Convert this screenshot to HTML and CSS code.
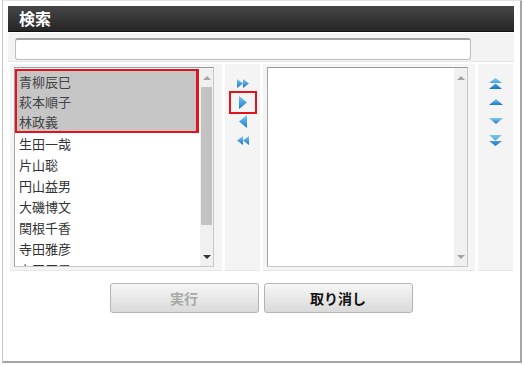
FILE: index.html
```html
<!DOCTYPE html>
<html lang="ja">
<head>
    <meta charset="UTF-8">
    <meta name="viewport" content="width=device-width, initial-scale=1.0">
    <title>検索</title>
    <link rel="stylesheet" href="styles.css">
</head>
<body>
    <svg width="0" height="0" class="defs">
        <defs>
            <linearGradient id="blue" x1="0" y1="0" x2="0" y2="1">
                <stop offset="0" stop-color="#7cc8f2"/>
                <stop offset="1" stop-color="#1877cc"/>
            </linearGradient>
        </defs>
    </svg>

    <div class="frame">
        <div class="head">検索</div>

        <div class="search">
            <input type="text" class="search-input">
        </div>

        <div class="lists">
            <!-- liste de gauche -->
            <div class="cell cell-list">
                <div class="box">
                    <div class="items">
                        <div class="picked">
                            <div class="item">青柳辰巳</div>
                            <div class="item">萩本順子</div>
                            <div class="item">林政義</div>
                        </div>
                        <div class="item">生田一哉</div>
                        <div class="item">片山聡</div>
                        <div class="item">円山益男</div>
                        <div class="item">大磯博文</div>
                        <div class="item">関根千香</div>
                        <div class="item">寺田雅彦</div>
                        <div class="item">上田辰男</div>
                    </div>
                    <div class="scroll">
                        <span class="arrow"><i class="tri-up"></i></span>
                        <span class="thumb"></span>
                        <span class="track"></span>
                        <span class="arrow"><i class="tri-down dark"></i></span>
                    </div>
                </div>
            </div>

            <!-- boutons de transfert -->
            <div class="cell cell-tools">
                <div class="tool">
                    <svg width="12" height="9" viewBox="0 0 12 9"><path d="M0 0L6 4.5L0 9Z M6 0L12 4.5L6 9Z" fill="url(#blue)"/></svg>
                </div>
                <div class="tool on">
                    <svg width="8" height="13" viewBox="0 0 8 13"><path d="M0 0L8 6.5L0 13Z" fill="url(#blue)"/></svg>
                </div>
                <div class="tool">
                    <svg width="8" height="13" viewBox="0 0 8 13"><path d="M8 0L0 6.5L8 13Z" fill="url(#blue)"/></svg>
                </div>
                <div class="tool">
                    <svg width="12" height="9" viewBox="0 0 12 9"><path d="M12 0L6 4.5L12 9Z M6 0L0 4.5L6 9Z" fill="url(#blue)"/></svg>
                </div>
            </div>

            <!-- liste de droite -->
            <div class="cell cell-list cell-right">
                <div class="box">
                    <div class="items"></div>
                    <div class="scroll">
                        <span class="arrow"><i class="tri-up"></i></span>
                        <span class="track"></span>
                        <span class="arrow"><i class="tri-down"></i></span>
                    </div>
                </div>
            </div>

            <!-- boutons d'ordre -->
            <div class="cell cell-tools cell-order">
                <div class="tool">
                    <svg width="13" height="11" viewBox="0 0 13 11"><path d="M0 5L6.5 0L13 5Z M0 11L6.5 5.5L13 11Z" fill="url(#blue)"/></svg>
                </div>
                <div class="tool">
                    <svg width="14" height="6" viewBox="0 0 14 6"><path d="M0 6L7 0L14 6Z" fill="url(#blue)"/></svg>
                </div>
                <div class="tool">
                    <svg width="14" height="6" viewBox="0 0 14 6"><path d="M0 0L7 6L14 0Z" fill="url(#blue)"/></svg>
                </div>
                <div class="tool">
                    <svg width="13" height="11" viewBox="0 0 13 11"><path d="M0 0L6.5 5.5L13 0Z M0 6L6.5 11L13 6Z" fill="url(#blue)"/></svg>
                </div>
            </div>
        </div>

        <div class="actions">
            <button class="btn" disabled>実行</button>
            <button class="btn">取り消し</button>
        </div>
    </div>
</body>
</html>
```

FILE: styles.css
```css
body {
    margin: 0;
    font-family: "Noto Sans CJK JP", "Liberation Sans", sans-serif;
    background: white;
}

.defs {
    position: absolute;
}

.frame {
    box-sizing: border-box;
    width: 520px;
    height: 363px;
    margin-left: 2px;
    border: 1px solid #c4c4c4;
    border-top-color: #e2e2e2;
    border-right: 2px solid #a6a6a6;
    border-bottom: 2px solid #a6a6a6;
    padding: 5px 6px 0 5px;
}

.head {
    height: 26px;
    background: linear-gradient(#464646, #262626);
    border-bottom: 1px solid #111;
    box-sizing: border-box;
    color: white;
    font-size: 16px;
    font-weight: bold;
    line-height: 25px;
    padding-left: 11px;
}

.search {
    margin-top: 1px;
    height: 29px;
    background: #f3f3f3;
    border-bottom: 1px solid #e4e4e4;
    padding: 5px 0 0 7px;
    box-sizing: border-box;
}

.search-input {
    display: block;
    box-sizing: border-box;
    width: 456px;
    height: 22px;
    margin: 0;
    border: 1px solid #bdbdbd;
    border-top: 2px solid #a2a2a2;
    border-radius: 3px;
    background: white;
}

.lists {
    display: grid;
    grid-template-columns: 212px 35px 212px 35px;
    gap: 3px;
    margin: 2px 0 0 2px;
    height: 207px;
}

.cell {
    background: #f4f4f4;
    border-bottom: 1px solid #e6e6e6;
}

.cell-list {
    padding: 3px 0 0 4px;
}

.box {
    display: flex;
    width: 200px;
    height: 200px;
    box-sizing: border-box;
    border: 1px solid #c8c8c8;
    border-top-color: #9a9a9a;
    border-left-color: #a6a6a6;
    background: white;
    overflow: hidden;
}

.cell-right .box {
    width: 201px;
}

.items {
    flex: 1;
    padding-top: 1px;
    overflow: hidden;
}

.item {
    height: 21px;
    line-height: 21px;
    padding-left: 4px;
    font-size: 13px;
    color: #333;
    white-space: nowrap;
}

.picked {
    background: #c6c6c6;
    border: 2px solid #e3131b;
    border-right-width: 3px;
    margin-right: 1px;
}

.picked .item {
    height: 20px;
    line-height: 21px;
    padding-left: 2px;
    color: #444;
}

.scroll {
    width: 13px;
    display: flex;
    flex-direction: column;
    background: #f0f0f0;
}

.arrow {
    height: 19px;
    display: flex;
    align-items: center;
    justify-content: center;
}

.arrow:last-child {
    height: 18px;
}

.tri-up {
    border-left: 4px solid transparent;
    border-right: 4px solid transparent;
    border-bottom: 4px solid #a4a4a4;
}

.tri-down {
    border-left: 4px solid transparent;
    border-right: 4px solid transparent;
    border-top: 4px solid #a4a4a4;
}

.tri-down.dark {
    border-top-color: #333;
}

.thumb {
    height: 138px;
    margin: 0 1px;
    background: #c2c2c2;
}

.track {
    flex: 1;
}

.cell-tools {
    display: flex;
    flex-direction: column;
    align-items: center;
    padding-top: 10px;
}

.tool {
    width: 24px;
    height: 19px;
    display: flex;
    align-items: center;
    justify-content: center;
}

.tool.on {
    box-shadow: 0 0 0 2px #e3131b;
}

.cell-order .tool:nth-child(2) {
    height: 17px;
}

.cell-order .tool:nth-child(3) {
    height: 21px;
}

.actions {
    display: flex;
    justify-content: center;
    gap: 5px;
    margin-top: 12px;
}

.btn {
    width: 149px;
    height: 30px;
    border: 1px solid #b4b4b4;
    border-radius: 3px;
    background: linear-gradient(#f6f6f6, #dadada);
    font-family: "Noto Sans CJK JP", sans-serif;
    font-size: 14px;
    font-weight: bold;
    color: #111;
    padding: 0;
}

.btn:disabled {
    color: #a8a8a8;
}
```
